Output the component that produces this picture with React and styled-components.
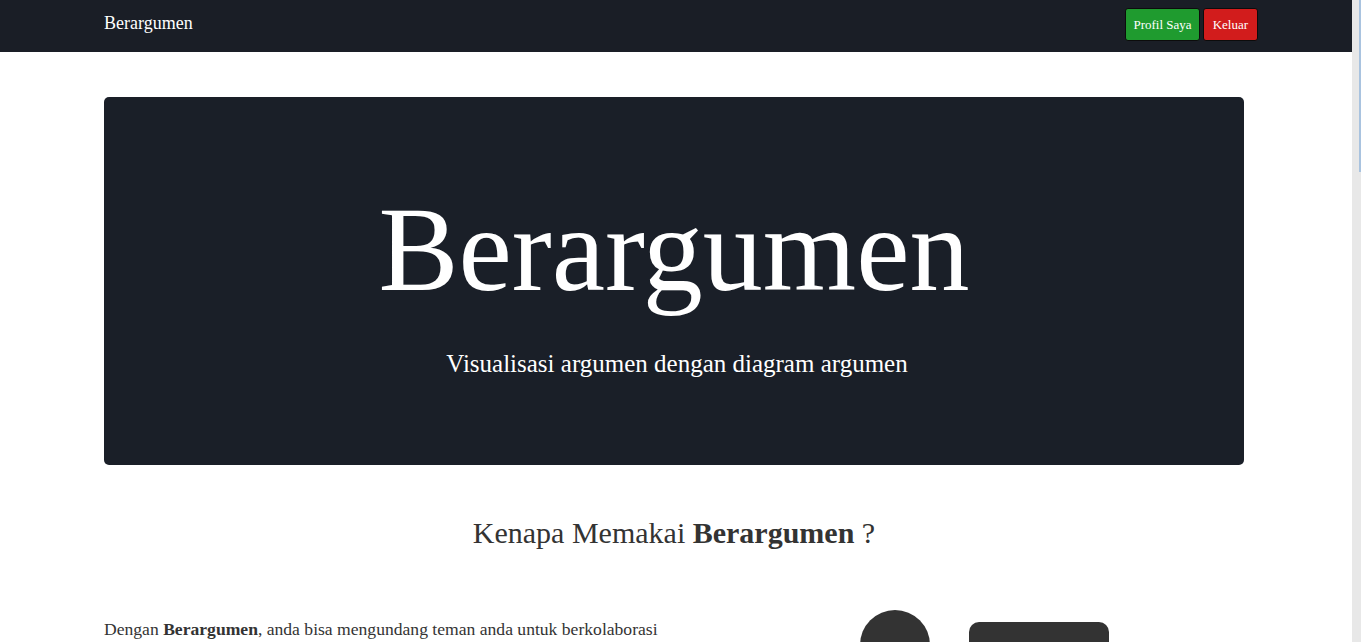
import React from "react";
import styled, { createGlobalStyle } from "styled-components";

const GlobalStyle = createGlobalStyle`
  html, body {
    margin: 0;
    padding: 0;
    background: #fff;
    font-family: "Liberation Serif", "Times New Roman", serif;
    color: #333;
  }
`;

const features = [
  {
    id: 1,
    lead: "Dengan ",
    strong: "Berargumen",
    rest: ", anda bisa mengundang teman anda untuk berkolaborasi",
  },
  {
    id: 2,
    lead: "Susun ",
    strong: "klaim",
    rest: ", alasan dan keberatan dalam satu diagram yang mudah dibaca",
  },
  {
    id: 3,
    lead: "Bagikan ",
    strong: "diagram",
    rest: " anda dan diskusikan argumen secara terbuka",
  },
];

const App = () => {
  return (
    <Page>
      <GlobalStyle />
      <Navbar>
        <Brand href="#">Berargumen</Brand>
        <NavButtons>
          <NavButton $color="#1f9b2f" $pad={7}>Profil Saya</NavButton>
          <NavButton $color="#d21c1c" $pad={9}>Keluar</NavButton>
        </NavButtons>
      </Navbar>

      <Container>
        <Jumbotron>
          <HeroTitle>Berargumen</HeroTitle>
          <HeroLead>Visualisasi argumen dengan diagram argumen</HeroLead>
        </Jumbotron>

        <SectionTitle>
          Kenapa Memakai <b>Berargumen</b> ?
        </SectionTitle>

        {features.map((f) => (
          <FeatureRow key={f.id}>
            <FeatureText>
              {f.lead}
              <b>{f.strong}</b>
              {f.rest}
            </FeatureText>
            <Illustration>
              <Avatar />
              <Bubble />
            </Illustration>
          </FeatureRow>
        ))}
      </Container>

      <Footer>&copy; Berargumen</Footer>

      {/* page scrollbar as it shows in the window */}
      <ScrollTrack>
        <ScrollThumb />
      </ScrollTrack>
    </Page>
  );
};

export default App;

const Page = styled.div`
  min-height: 2400px;
`;

const Navbar = styled.nav`
  height: 52px;
  background: #1a1e26;
  display: flex;
  justify-content: space-between;
  align-items: flex-start;
  padding: 0 103px 0 104px;
  box-sizing: border-box;
`;

const Brand = styled.a`
  color: #fff;
  font-size: 18px;
  line-height: 27px;
  padding-top: 10px;
  text-decoration: none;
`;

const NavButtons = styled.div`
  display: flex;
  gap: 3px;
  padding-top: 8px;
`;

const NavButton = styled.button`
  background: ${(p) => p.$color};
  color: #fff;
  font-family: "Liberation Serif", "Times New Roman", serif;
  font-size: 13px;
  height: 33px;
  padding: 0 ${(p) => p.$pad}px;
  border: 1px solid #0c0c0c;
  border-radius: 3px;
  cursor: pointer;
`;

const Container = styled.main`
  width: 1140px;
  margin-left: 104px;
`;

const Jumbotron = styled.section`
  margin-top: 45px;
  height: 368px;
  box-sizing: border-box;
  padding-top: 93px;
  background: #1a1f28;
  border-radius: 5px;
  color: #fff;
  text-align: center;
`;

const HeroTitle = styled.h1`
  margin: 0;
  font-size: 120px;
  font-weight: 400;
  line-height: 120px;
`;

const HeroLead = styled.p`
  margin: 39px 0 0;
  padding-left: 6px;
  font-size: 25px;
  line-height: 30px;
`;

const SectionTitle = styled.h2`
  margin: 50px 0 0;
  font-size: 30px;
  font-weight: 400;
  line-height: 36px;
  text-align: center;
  color: #333;
`;

const FeatureRow = styled.div`
  display: grid;
  grid-template-columns: 570px 570px;
  margin-top: 59px;
`;

const FeatureText = styled.p`
  margin: 0;
  padding-top: 6px;
  font-size: 17.6px;
  line-height: 26.4px;
  color: #333;
`;

const Illustration = styled.div`
  display: flex;
  align-items: flex-start;
  gap: 39px;
  padding-left: 186px;
`;

const Avatar = styled.div`
  width: 70px;
  height: 70px;
  border-radius: 50%;
  background: #333;
`;

const Bubble = styled.div`
  width: 140px;
  height: 90px;
  margin-top: 12px;
  border-radius: 10px;
  background: #333;
`;

const Footer = styled.footer`
  margin-top: 120px;
  padding: 30px 0;
  text-align: center;
  font-size: 14px;
  color: #777;
`;

const ScrollTrack = styled.div`
  position: fixed;
  top: 0;
  right: 0;
  width: 9px;
  height: 100vh;
  background: #e8e8e8;
`;

const ScrollThumb = styled.div`
  margin-left: 7px;
  width: 2px;
  height: 172px;
  background: #a9c3df;
`;
